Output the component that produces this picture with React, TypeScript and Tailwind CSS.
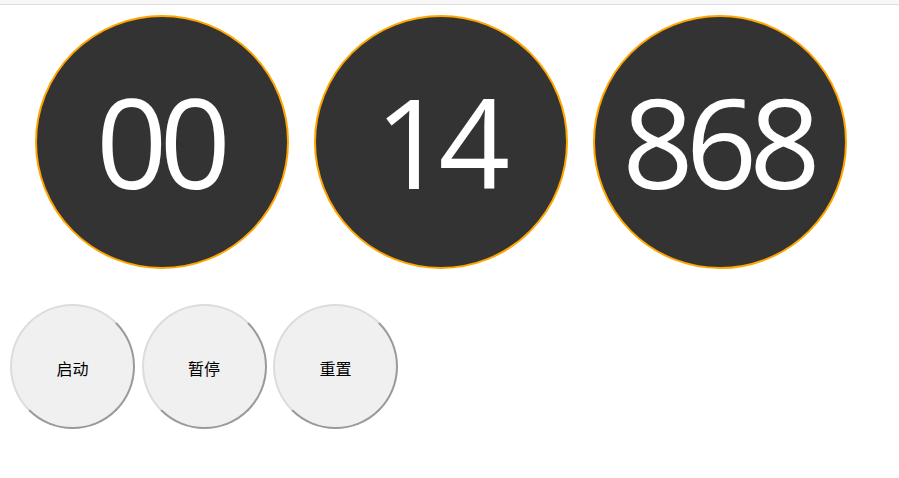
import React, { useState } from 'react';

const pad = (n: number, len: number) => String(n).padStart(len, '0');

const App: React.FC = () => {
  const [ms] = useState(14868);

  const parts = [pad(Math.floor(ms / 60000), 2), pad(Math.floor(ms / 1000) % 60, 2), pad(ms % 1000, 3)];
  const buttons = ['启动', '暂停', '重置'];

  return (
    <div className="min-h-[478px] bg-white">
      <div className="h-[5px] bg-[#f8f8f8] border-b border-[#dedede]" />

      {/* 计时显示 */}
      <div className="mt-[10px] pl-[35px] flex gap-[25px]">
        {parts.map((p, i) => (
          <div
            key={i}
            className="w-[254px] h-[254px] rounded-full bg-[#333333] border-2 border-[#ffa500] flex items-center justify-center"
          >
            <span
              className="text-white text-[125px] leading-none tracking-[-8px] pr-[5px] pb-[3px]"
              style={{ fontFamily: '"Open Sans", "Noto Sans", sans-serif' }}
            >
              {p}
            </span>
          </div>
        ))}
      </div>

      {/* 操作按钮 */}
      <div className="mt-[35px] pl-[10px] flex gap-[6.5px]">
        {buttons.map((b) => (
          <button
            key={b}
            className="w-[125px] h-[125px] rounded-full bg-[#f0f0f0] border-2 border-t-[#dcdcdc] border-l-[#dcdcdc] border-r-[#9a9a9a] border-b-[#9a9a9a] text-black text-[16px] pt-[3px] flex items-center justify-center"
            style={{ fontFamily: '"Noto Sans CJK SC", "Noto Sans", sans-serif' }}
          >
            {b}
          </button>
        ))}
      </div>
    </div>
  );
};

export default App;
